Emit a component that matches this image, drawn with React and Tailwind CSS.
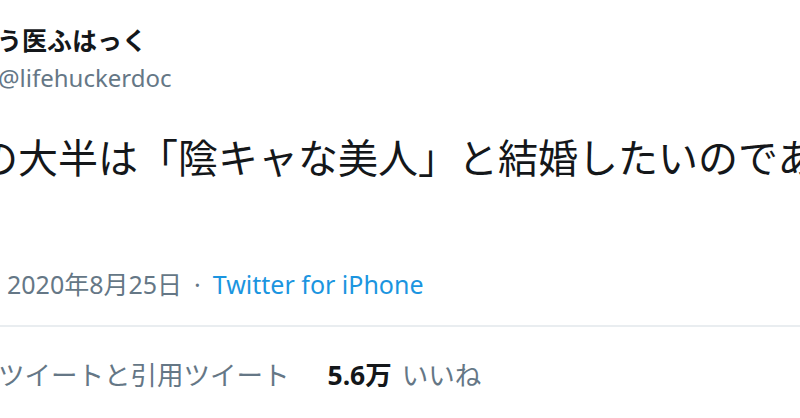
export default function App() {
  return (
    <div
      className="w-[800px] h-[418px] overflow-hidden bg-white text-[#14171a]"
      style={{ fontFamily: '"Noto Sans", "Noto Sans CJK JP", sans-serif' }}
    >
      <div className="pt-[22px]">
        {/* name + handle */}
        <div className="-ml-[3px] h-[37px] leading-[37px] text-[25px] font-bold whitespace-nowrap">
          う医ふはっく
        </div>
        <div className="-ml-[2px] h-[37px] leading-[37px] text-[24px] text-[#657786] whitespace-nowrap">
          @lifehuckerdoc
        </div>

        {/* tweet body */}
        <div className="mt-[34px] -ml-[22px] h-[56px] leading-[56px] text-[40px] whitespace-nowrap">
          の大半は「陰キャな美人」と結婚したいのである
        </div>

        {/* date / source */}
        <div className="mt-[80px] pl-[7px] h-[36px] leading-[36px] text-[25px] text-[#657786] whitespace-nowrap flex items-center">
          <span>2020年8月25日</span>
          <span className="mx-[12px]">·</span>
          <span className="text-[#1b95e0]">Twitter for iPhone</span>
        </div>

        <div className="mt-[23px] h-[2px] bg-[#e9edf0]" />

        {/* stats */}
        <div className="mt-[30px] -ml-[2px] h-[36px] leading-[36px] text-[26.5px] whitespace-nowrap flex items-center">
          <span className="text-[#657786]">ツイートと引用ツイート</span>
          <span className="ml-[38px] font-bold">5.6万</span>
          <span className="ml-[10px] text-[#657786]">いいね</span>
        </div>
      </div>
    </div>
  );
}
